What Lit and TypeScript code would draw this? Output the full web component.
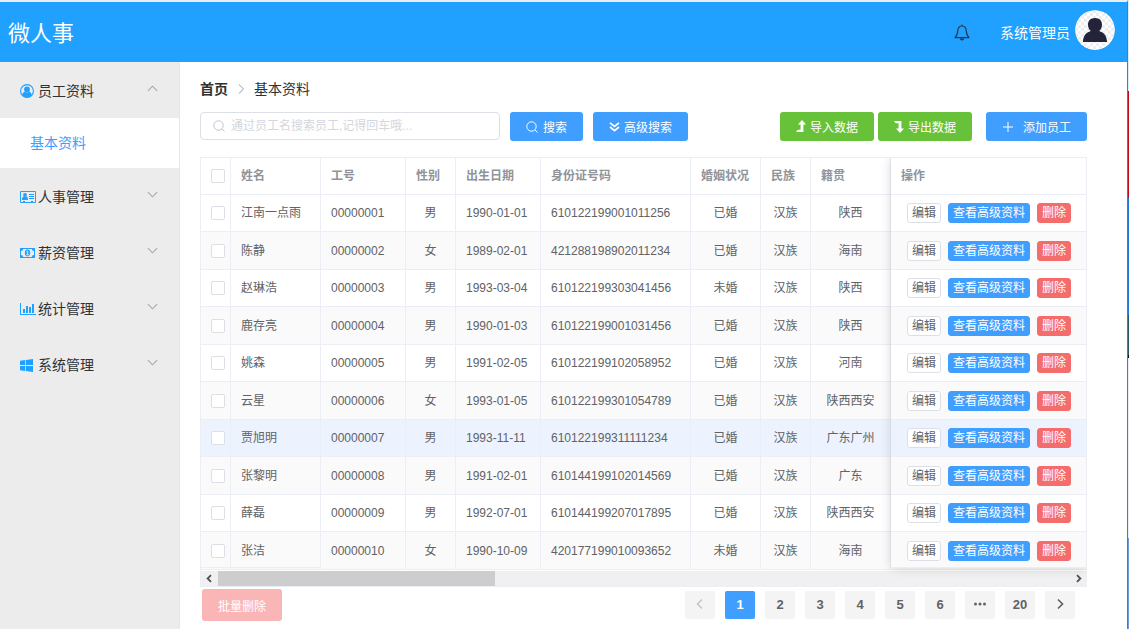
import { LitElement, html, css, svg } from "lit";
import { customElement, state } from "lit/decorators.js";
import { classMap } from "lit/directives/class-map.js";

interface Employee {
  name: string;
  workId: string;
  gender: string;
  birthday: string;
  idCard: string;
  wedlock: string;
  nation: string;
  nativePlace: string;
}

const row = (
  name: string, workId: string, gender: string, birthday: string,
  idCard: string, wedlock: string, nation: string, nativePlace: string,
): Employee => ({ name, workId, gender, birthday, idCard, wedlock, nation, nativePlace });

const EMPLOYEES: Employee[] = [
  row("江南一点雨", "00000001", "男", "1990-01-01", "610122199001011256", "已婚", "汉族", "陕西"),
  row("陈静", "00000002", "女", "1989-02-01", "421288198902011234", "已婚", "汉族", "海南"),
  row("赵琳浩", "00000003", "男", "1993-03-04", "610122199303041456", "未婚", "汉族", "陕西"),
  row("鹿存亮", "00000004", "男", "1990-01-03", "610122199001031456", "已婚", "汉族", "陕西"),
  row("姚森", "00000005", "男", "1991-02-05", "610122199102058952", "已婚", "汉族", "河南"),
  row("云星", "00000006", "女", "1993-01-05", "610122199301054789", "已婚", "汉族", "陕西西安"),
  row("贾旭明", "00000007", "男", "1993-11-11", "610122199311111234", "已婚", "汉族", "广东广州"),
  row("张黎明", "00000008", "男", "1991-02-01", "610144199102014569", "已婚", "汉族", "广东"),
  row("薛磊", "00000009", "男", "1992-07-01", "610144199207017895", "已婚", "汉族", "陕西西安"),
  row("张洁", "00000010", "女", "1990-10-09", "420177199010093652", "未婚", "汉族", "海南"),
];

const ICONS = {
  user: svg`<svg width="14" height="14" viewBox="0 0 14 14"><circle cx="7" cy="7" r="6.4" fill="none" stroke="currentColor" stroke-width="1.1"/><circle cx="7" cy="5.4" r="2.9" fill="currentColor"/><path fill="currentColor" d="M2.2 11.2C2.5 9 3.6 7.9 4.9 7.8c1.2 1 3 1 4.200 0 1.300.1 2.400 1.200 2.700 3.400A6.400 6.400 0 0 1 7 13.400 6.400 6.400 0 0 1 2.200 11.200z"/></svg>`,
  card: svg`<svg width="16" height="12" viewBox="0 0 16 12"><path fill="none" stroke="currentColor" d="M.5.5h15v11H.5z"/><path stroke="currentColor" d="M9 3.500h5M9 5.500h5M9 7.500h5M3 10.500h2M11 10.500h2"/><circle cx="5" cy="4" r="1.900" fill="currentColor"/><path fill="currentColor" d="M2 9c0-2.200.6-3.400 1.600-3.400.8.6 2 .6 2.800 0C7.400 5.600 8 6.800 8 9z"/></svg>`,
  money: svg`<svg width="15" height="10" viewBox="0 0 15 10"><path fill="currentColor" fill-rule="evenodd" d="M0 0h15v10H0zM3.200 1C3.200 2.200 2.300 3 1 3v4c1.300 0 2.200.8 2.200 2h8.600c0-1.200.9-2 2.200-2V3c-1.300 0-2.200-.8-2.200-2z"/><ellipse cx="7.500" cy="5" rx="2.700" ry="3.400" fill="currentColor"/><path fill="none" stroke="#ececec" stroke-width=".9" d="M6.500 3.700l1.200-.6v3.500M6.300 6.800h2.600"/></svg>`,
  chart: svg`<svg width="16" height="12" viewBox="0 0 16 12"><path fill="currentColor" d="M0 0h1v11h15v1H0zM3 6h2v4H3zM6 3h2v7H6zM9 4h2v6H9zM12 1h2v9h-2z"/></svg>`,
  windows: svg`<svg width="13" height="13" viewBox="0 0 13 13"><path fill="currentColor" d="M0 1.800l5.300-.7v5H0zM6 1l7-1v6.100H6zM0 6.900h5.300v5L0 11.200zM6 6.900h7V13l-7-1z"/></svg>`,
  search: svg`<svg width="12" height="12" viewBox="0 0 12 12"><circle cx="5.500" cy="5.500" r="4.700" fill="none" stroke="currentColor"/><path stroke="currentColor" d="M8.900 8.900l2.600 2.600"/></svg>`,
  down: svg`<svg width="11" height="10" viewBox="0 0 11 10"><path fill="none" stroke="currentColor" stroke-width="1.700" d="M1 .8l4.500 3.700L10 .8M1 5l4.500 3.700L10 5"/></svg>`,
  importUp: svg`<svg width="10" height="13" viewBox="0 0 10 13"><path fill="currentColor" d="M6 0l4 4.500H7.400V12H0l1.800-2.200h2.800V4.500H2z"/></svg>`,
  exportDown: svg`<svg width="10" height="13" viewBox="0 0 10 13"><path fill="currentColor" d="M6 13l4-4.500H7.400V1H0l1.800 2.200h2.800v5.300H2z"/></svg>`,
  plus: svg`<svg width="12" height="12" viewBox="0 0 12 12"><path stroke="currentColor" d="M6 1v10M1 6h10"/></svg>`,
  bell: svg`<svg width="16" height="17" viewBox="0 0 16 17"><path fill="none" stroke="currentColor" stroke-width="1.200" stroke-linejoin="round" d="M8 2C5.300 2 4 4 3.800 6.500 3.600 10.500 2.800 12 1 13.600h14c-1.800-1.600-2.600-3.100-2.800-7.100C12 4 10.700 2 8 2zM8 .4V2"/><path fill="currentColor" d="M5.800 14.600h4.400a2.200 1.900 0 0 1-4.400 0z"/></svg>`,
};

const chevron = (d: string, size = 12, width = 1.2) => svg`<svg width=${size} height=${size} viewBox="0 0 12 12"><path fill="none" stroke="currentColor" stroke-width=${width} d=${d}/></svg>`;
const UP = "M1 8.500l5-5 5 5";
const DOWN = "M1 3.500l5 5 5-5";
const LEFT = "M8 1.500L3.500 6 8 10.500";
const RIGHT = "M4 1.500L8.500 6 4 10.500";

const MENU = [
  { label: "员工资料", icon: ICONS.user, children: ["基本资料"] },
  { label: "人事管理", icon: ICONS.card, children: [] },
  { label: "薪资管理", icon: ICONS.money, children: [] },
  { label: "统计管理", icon: ICONS.chart, children: [] },
  { label: "系统管理", icon: ICONS.windows, children: [] },
];

const shared = css`
  * { box-sizing: border-box; }
  button, input { font: inherit; color: inherit; margin: 0; }
  button { cursor: pointer; padding: 0; border: 0; background: none; }
  svg { display: block; flex: none; }
`;

@customElement("hr-header")
class HrHeader extends LitElement {
  static styles = [shared, css`
    :host { display: flex; align-items: center; height: 60px; padding: 0 12px 0 8px; background: #20a0ff; color: #fff; }
    .title { flex: 1; margin: 0; padding-top: 4px; font-size: 22px; line-height: 30px; font-weight: 400; }
    .bell { color: #26384d; margin-right: 30px; }
    .user { display: flex; align-items: center; gap: 5px; font-size: 14px; line-height: 20px; padding-bottom: 4px; }
    .name { padding-top: 6px; }
    .avatar { border-radius: 50%; }
  `];
  render() {
    return html`
      <h1 class="title">微人事</h1>
      <button class="bell" aria-label="消息">${ICONS.bell}</button>
      <button class="user">
        <span class="name">系统管理员</span>
        <svg class="avatar" width="40" height="40" viewBox="0 0 40 40" aria-hidden="true">
          <defs><pattern id="check" width="6" height="6" patternUnits="userSpaceOnUse"><path fill="#fff" d="M0 0h6v6H0z"/><path fill="#eee" d="M0 0h3v3H0zM3 3h3v3H3z"/></pattern></defs>
          <circle cx="20" cy="20" r="20" fill="url(#check)"/>
          <path fill="#23233a" d="M20 8c4.500 0 7 2.800 7 6.500 0 3-1 5-2.800 6.500C29 22.500 32 26 32 32H8c0-6 3-9.500 7.800-11C14 19.500 13 17.500 13 14.500 13 10.800 15.500 8 20 8z"/>
        </svg>
      </button>`;
  }
}

@customElement("hr-menu")
class HrMenu extends LitElement {
  static styles = [shared, css`
    :host { display: block; background: #ececec; border-right: 1px solid #e6e6e6; font-size: 14px; }
    .group { display: flex; align-items: center; width: 100%; height: 56px; padding: 2px 21px 0 20px; color: #303133; text-align: left; }
    .icon { display: flex; width: 18px; color: #20a0ff; }
    .label { flex: 1; line-height: 20px; }
    .arrow { color: #a3a6ab; padding-bottom: 5px; }
    .item { display: flex; align-items: center; height: 50px; padding: 0 30px 2px; background: #fff; color: #409eff; text-decoration: none; }
  `];
  render() {
    return html`<nav>${MENU.map((m) => html`
      <button class="group" aria-expanded=${m.children.length > 0}>
        <span class="icon">${m.icon}</span><span class="label">${m.label}</span>
        <span class="arrow">${chevron(m.children.length ? UP : DOWN, 11)}</span>
      </button>
      ${m.children.map((c) => html`<a class="item" href="#">${c}</a>`)}`)}</nav>`;
  }
}

@customElement("hr-toolbar")
class HrToolbar extends LitElement {
  static styles = [shared, css`
    :host { display: flex; justify-content: space-between; align-items: flex-start; font-size: 12px; }
    .left, .right { display: flex; }
    .left { gap: 10px; }
    .right { gap: 4px; }
    .search { display: flex; align-items: center; gap: 6px; width: 300px; height: 28px; padding: 0 12px; border: 1px solid #dcdfe6; border-radius: 4px; color: #c0c4cc; }
    .input { flex: 1; min-width: 0; border: 0; padding: 0; outline: 0; background: none; color: #606266; }
    .input::placeholder { color: #d3d6dd; opacity: 1; }
    .btn { display: flex; align-items: center; height: 29px; padding: 0 16px; border-radius: 3px; color: #fff; white-space: nowrap; gap: 4px; }
    .primary { background: #409eff; }
    .success { background: #67c23a; }
    .find { gap: 5px; }
    .add { gap: 9px; margin-left: 10px; }
  `];
  render() {
    return html`
      <div class="left">
        <label class="search">${ICONS.search}<input class="input" aria-label="搜索员工" placeholder="通过员工名搜索员工,记得回车哦..." /></label>
        <button class="btn primary find">${ICONS.search}搜索</button>
        <button class="btn primary">${ICONS.down}高级搜索</button>
      </div>
      <div class="right">
        <button class="btn success">${ICONS.importUp}导入数据</button>
        <button class="btn success">${ICONS.exportDown}导出数据</button>
        <button class="btn primary add">${ICONS.plus}添加员工</button>
      </div>`;
  }
}

@customElement("hr-table")
class HrTable extends LitElement {
  static styles = [shared, css`
    :host { display: block; font-size: 12px; line-height: 18px; color: #606266; }
    .frame { position: relative; border: 1px solid #ebeef5; border-right: 0; overflow: hidden; }
    .table { width: 100%; table-layout: fixed; border-collapse: separate; border-spacing: 0; }
    .table th, .table td { height: 37px; padding: 0 0 0 10px; border: 0 solid #ebeef5; border-width: 0 1px 1px 0; text-align: left; white-space: nowrap; }
    .table th { color: #909399; font-weight: 700; }
    .table tr:nth-child(even) td { height: 38px; background: #fafafa; }
    .table tr.current td { background: #ecf3ff; }
    .table td.center { padding: 0; text-align: center; }
    .c-check { width: 30px; }
    .c-name { width: 90px; }
    .c-id, .c-birth { width: 85px; }
    .c-sex, .c-nation { width: 50px; }
    .c-card { width: 150px; }
    .c-wed { width: 70px; }
    .c-ops { width: 196px; }
    .check { appearance: none; display: block; width: 14px; height: 14px; border: 1px solid #dcdfe6; border-radius: 2px; background: #fff; }
    .ops { display: flex; gap: 7px; padding-left: 6px; }
    .op { height: 20px; padding: 0 4px; border: 1px solid #dcdfe6; border-radius: 3px; background: #fff; line-height: 18px; }
    .view { background: #409eff; border-color: #409eff; color: #fff; }
    .del { background: #f56c6c; border-color: #f56c6c; color: #fff; }
    .pinned { position: absolute; top: 0; right: 0; bottom: 18px; width: 196px; border-bottom: 1px solid #ebeef5; box-shadow: 0 0 10px rgba(0, 0, 0, 0.16); pointer-events: none; }
    .pinned.start { right: auto; left: 0; width: 120px; box-shadow: none; }
    .bar { display: flex; align-items: center; height: 15px; margin-top: 1px; background: #f0f0f0; color: #505050; }
    .step { display: flex; justify-content: center; width: 17px; flex: none; }
    .track { flex: 1; height: 15px; }
    .thumb { width: 277px; height: 15px; background: #cdcdcd; }
  `];
  @state() private current = 6;
  render() {
    return html`
      <div class="frame">
        <table class="table">
          <colgroup>
            <col class="c-check" /><col class="c-name" /><col class="c-id" /><col class="c-sex" /><col class="c-birth" />
            <col class="c-card" /><col class="c-wed" /><col class="c-nation" /><col /><col class="c-ops" />
          </colgroup>
          <thead>
            <tr>
              <th><input type="checkbox" class="check" aria-label="全选" /></th>
              ${["姓名", "工号", "性别", "出生日期", "身份证号码", "婚姻状况", "民族", "籍贯", "操作"].map((h) => html`<th scope="col">${h}</th>`)}
            </tr>
          </thead>
          <tbody>
            ${EMPLOYEES.map((e, i) => html`
              <tr class=${classMap({ current: i === this.current })} @mouseenter=${() => (this.current = i)}>
                <td><input type="checkbox" class="check" aria-label=${e.name} /></td>
                <td>${e.name}</td>
                <td>${e.workId}</td>
                <td class="center">${e.gender}</td>
                <td>${e.birthday}</td>
                <td>${e.idCard}</td>
                <td class="center">${e.wedlock}</td>
                <td class="center">${e.nation}</td>
                <td class="center">${e.nativePlace}</td>
                <td><div class="ops">
                  <button class="op">编辑</button>
                  <button class="op view">查看高级资料</button>
                  <button class="op del">删除</button>
                </div></td>
              </tr>`)}
          </tbody>
        </table>
        <div class="pinned start"></div>
        <div class="pinned"></div>
        <div class="bar">
          <button class="step" aria-label="向左滚动">${chevron(LEFT, 9, 2.4)}</button>
          <div class="track"><div class="thumb"></div></div>
          <button class="step" aria-label="向右滚动">${chevron(RIGHT, 9, 2.4)}</button>
        </div>
      </div>`;
  }
}

@customElement("hr-footer")
class HrFooter extends LitElement {
  static styles = [shared, css`
    :host { display: flex; justify-content: space-between; align-items: flex-start; padding: 2px 12px 0 2px; }
    .batch { height: 32px; padding: 0 16px; border-radius: 3px; background: #fab6b6; color: #fff; font-size: 12px; cursor: not-allowed; }
    .pages { display: flex; gap: 10px; padding-top: 2px; }
    .page { display: flex; align-items: center; justify-content: center; width: 30px; height: 28px; padding-bottom: 2px; border-radius: 2px; background: #f4f4f5; color: #606266; font-size: 13px; font-weight: 700; }
    .active { background: #409eff; color: #fff; }
    .off { color: #c0c4cc; }
  `];
  render() {
    const more = svg`<svg width="12" height="4" viewBox="0 0 12 4"><path fill="currentColor" d="M0 2a1.500 1.500 0 0 1 3 0 1.500 1.500 0 0 1-3 0M4.500 2a1.500 1.500 0 0 1 3 0 1.500 1.500 0 0 1-3 0M9 2a1.500 1.500 0 0 1 3 0 1.500 1.500 0 0 1-3 0"/></svg>`;
    return html`
      <button class="batch" disabled>批量删除</button>
      <nav class="pages" aria-label="分页">
        <button class="page off" disabled aria-label="上一页">${chevron(LEFT, 12, 1.5)}</button>
        ${[1, 2, 3, 4, 5, 6].map((n) => html`<button class=${classMap({ page: true, active: n === 1 })}>${n}</button>`)}
        <button class="page" aria-label="更多">${more}</button>
        <button class="page">20</button>
        <button class="page" aria-label="下一页">${chevron(RIGHT, 12, 1.7)}</button>
      </nav>`;
  }
}

@customElement("app-root")
class AppRoot extends LitElement {
  static styles = [shared, css`
    :host { display: flex; min-height: 100vh; background: #fff; font-family: "Liberation Sans", "Noto Sans CJK SC", sans-serif; color: #303133; }
    .window { display: flex; flex-direction: column; flex: 1; min-width: 0; border-top: 2px solid #e9eef3; border-right: 1px solid #1f88e5; }
    .desktop { width: 1px; background: linear-gradient(#d9ecfb 0 91px, #c00a1c 91px 198px, #1f78d4 198px 315px, #2c5568 315px 355px, #101010 355px 358px, #e8eef3 358px 538px, #6a9ce0 538px); }
    .body { display: flex; flex: 1; }
    .side { width: 180px; flex: none; }
    .main { flex: 1; min-width: 0; padding: 20px 40px 0 20px; }
    .crumbs { display: flex; align-items: center; gap: 7px; height: 14px; margin-bottom: 16px; font-size: 14px; line-height: 14px; }
    .home { color: #303133; font-weight: 700; text-decoration: none; }
    .sep { color: #c0c4cc; }
    .tools { margin-bottom: 16px; }
  `];
  render() {
    return html`
      <div class="window">
        <hr-header></hr-header>
        <div class="body">
          <hr-menu class="side"></hr-menu>
          <main class="main">
            <nav class="crumbs" aria-label="当前位置"><a class="home" href="#">首页</a><span class="sep">${chevron(RIGHT)}</span><span>基本资料</span></nav>
            <hr-toolbar class="tools"></hr-toolbar>
            <hr-table></hr-table>
            <hr-footer></hr-footer>
          </main>
        </div>
      </div>
      <div class="desktop"></div>`;
  }
}
